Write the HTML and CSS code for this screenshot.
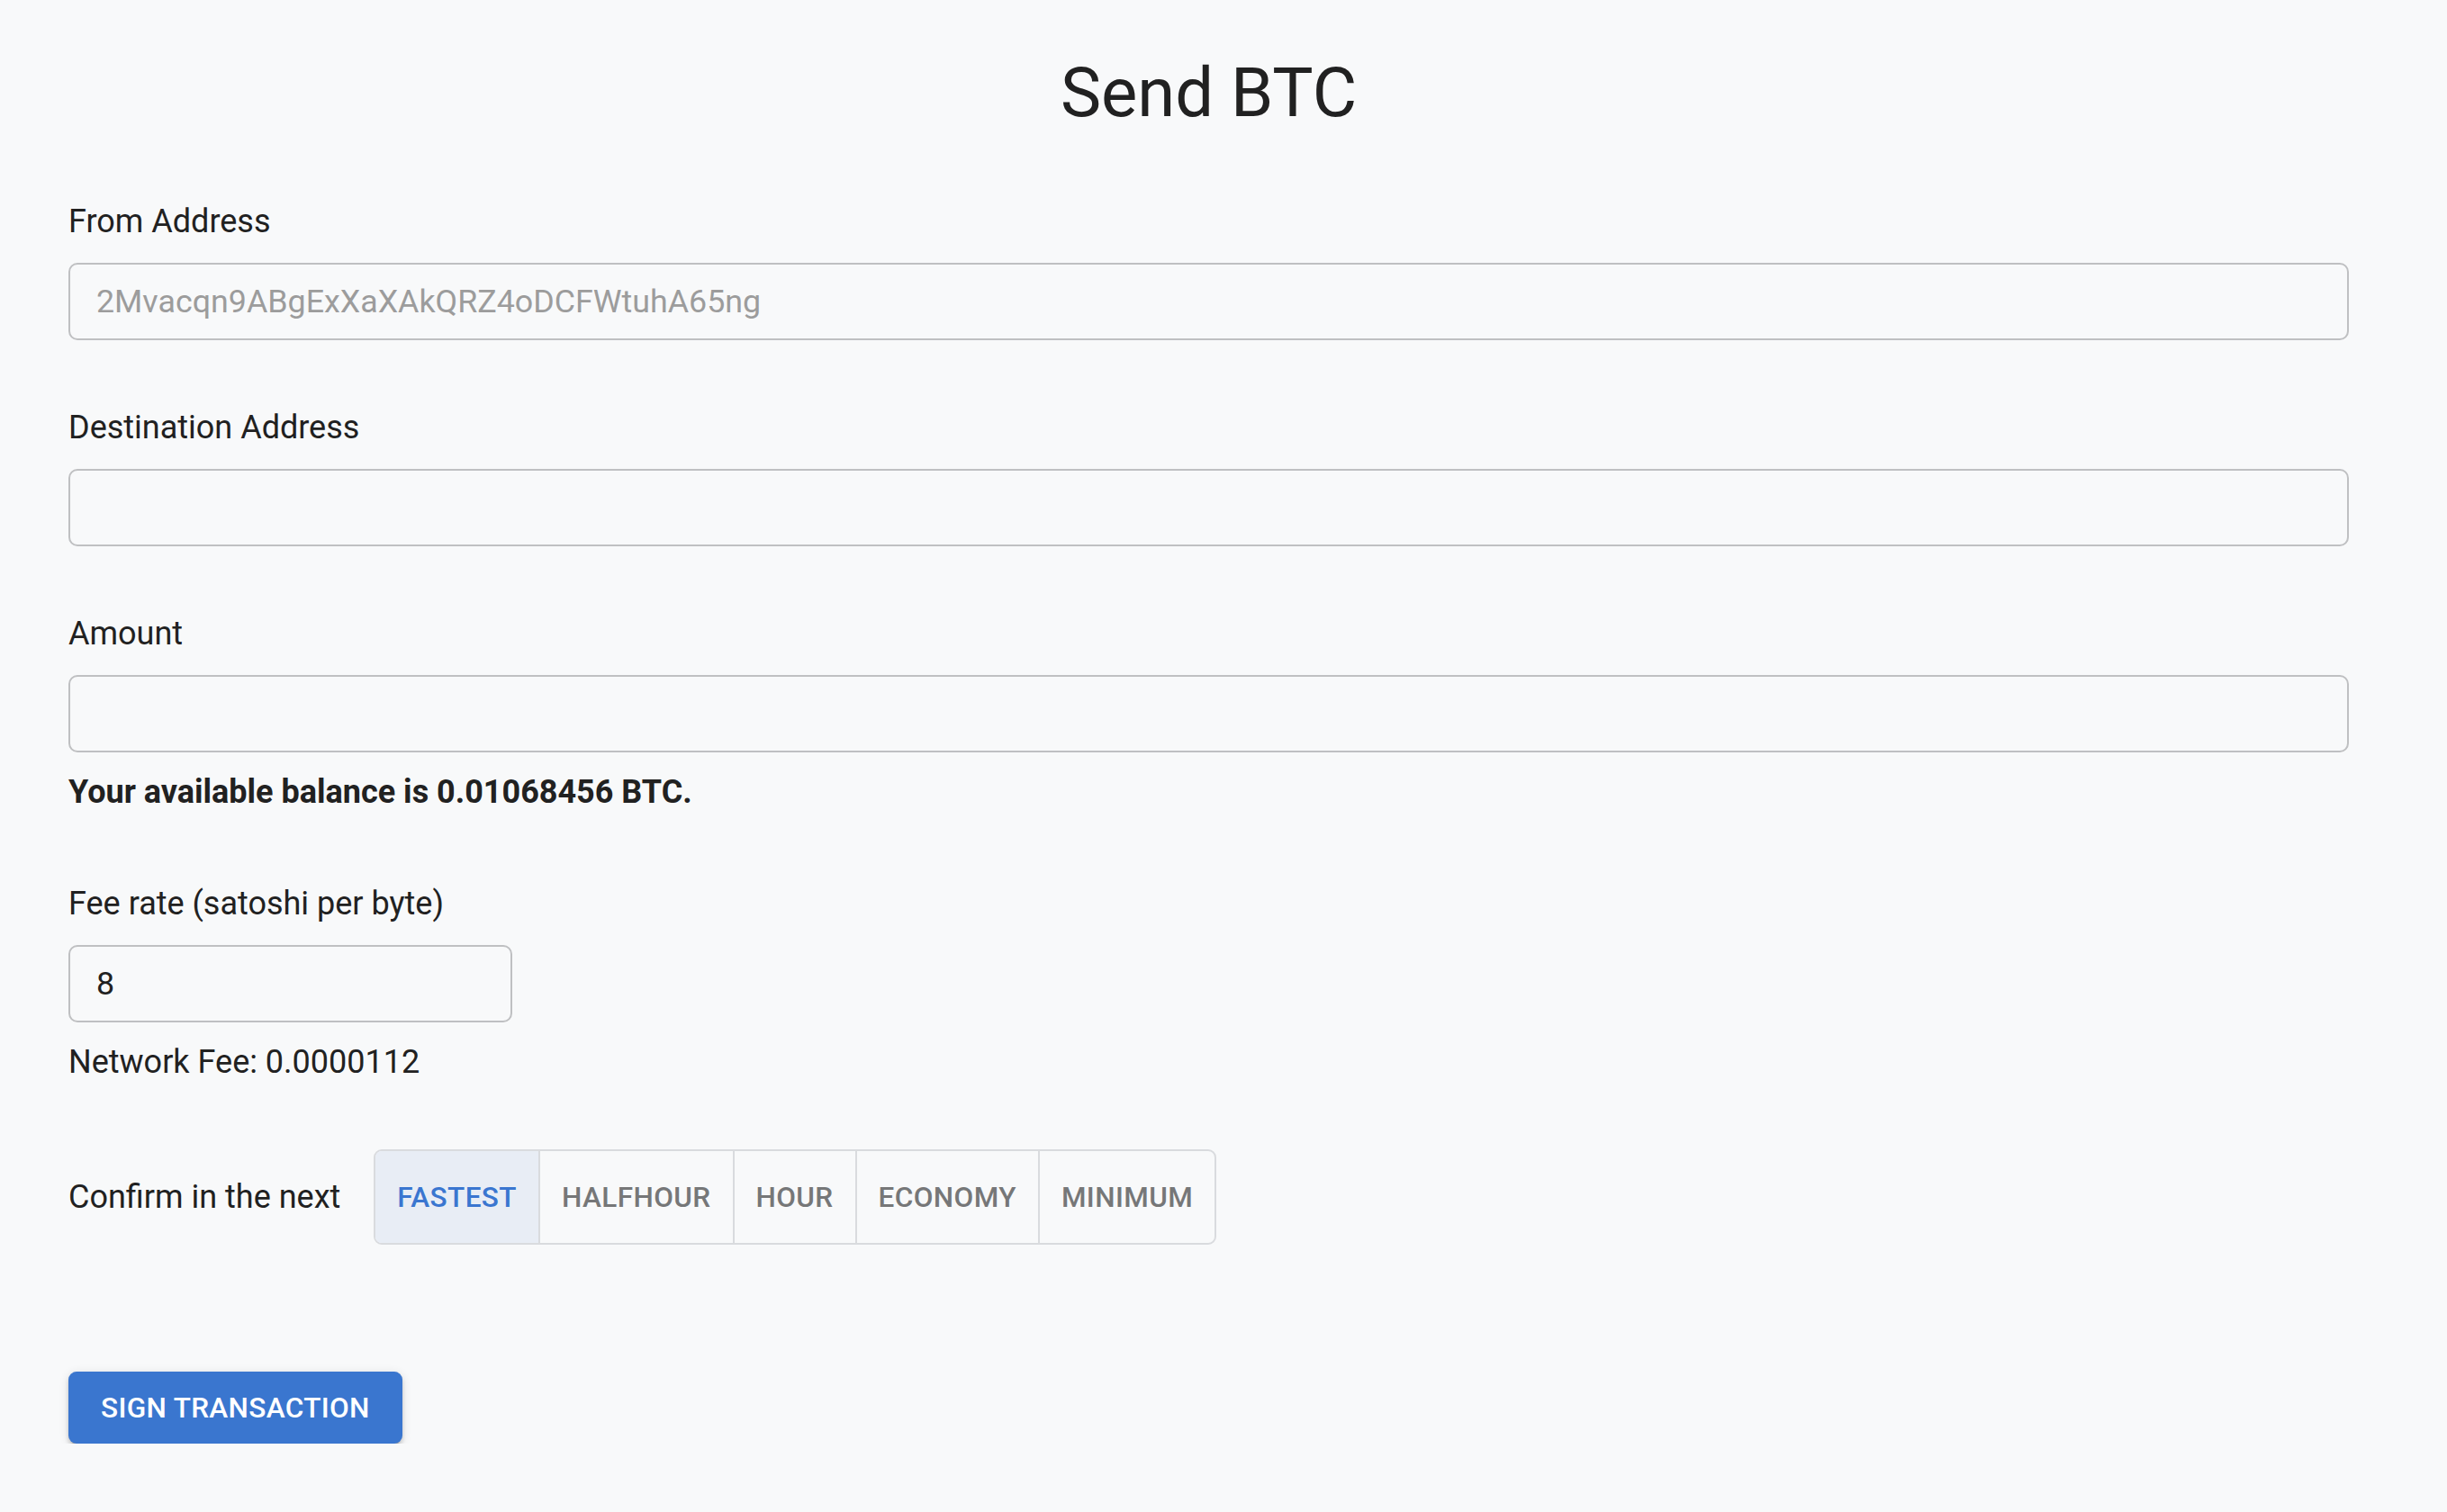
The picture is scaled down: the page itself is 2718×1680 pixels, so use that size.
FILE: index.html
```html
<!DOCTYPE html>
<html lang="en">
<head>
<meta charset="utf-8">
<title>Send BTC</title>
<link rel="stylesheet" href="styles.css">
</head>
<body>
<main class="page">
  <h1 class="title">Send BTC</h1>

  <div class="field">
    <label class="label" for="from">From Address</label>
    <input id="from" class="input input-disabled" type="text" value="2Mvacqn9ABgExXaXAkQRZ4oDCFWtuhA65ng" readonly>
  </div>

  <div class="field">
    <label class="label" for="dest">Destination Address</label>
    <input id="dest" class="input" type="text">
  </div>

  <div class="field">
    <label class="label" for="amount">Amount</label>
    <input id="amount" class="input" type="text">
    <p class="balance">Your available balance is 0.01068456 BTC.</p>
  </div>

  <div class="field">
    <label class="label" for="fee">Fee rate (satoshi per byte)</label>
    <input id="fee" class="input input-small" type="text" value="8">
    <p class="note">Network Fee: 0.0000112</p>
  </div>

  <div class="confirm">
    <span class="confirm-label">Confirm in the next</span>
    <div class="toggle-group">
      <button class="toggle selected" type="button">Fastest</button>
      <button class="toggle" type="button">Halfhour</button>
      <button class="toggle" type="button">Hour</button>
      <button class="toggle" type="button">Economy</button>
      <button class="toggle" type="button">Minimum</button>
    </div>
  </div>

  <div class="actions">
    <button class="primary" type="button">Sign Transaction</button>
  </div>
</main>
</body>
</html>
```

FILE: styles.css
```css
* {
  box-sizing: border-box;
}

html, body {
  margin: 0;
  background: #f8f9fa;
}

body {
  font-family: Roboto, "Liberation Sans", Arial, sans-serif;
  color: #212121;
  font-size: 36px;
  line-height: 54px;
}

.page {
  padding: 58px 109px 0 76px;
}

.title {
  margin: 0 0 70px;
  font-size: 76px;
  line-height: 91px;
  font-weight: 400;
  text-align: center;
  color: #212121;
}

.field {
  margin-bottom: 70px;
}

.label {
  display: block;
  margin-bottom: 19px;
  font-size: 36px;
  line-height: 54px;
}

.input {
  display: block;
  width: 100%;
  height: 86px;
  padding: 0 29px;
  border: 2px solid #bfc0c2;
  border-radius: 10px;
  background: transparent;
  font-family: inherit;
  font-size: 35.8px;
  color: #212121;
  outline: none;
}

.input-disabled {
  color: #9c9c9c;
}

.input-small {
  width: 493px;
}

.balance {
  margin: 17px 0 0;
  font-weight: 700;
}

.note {
  margin: 17px 0 0;
}

.confirm {
  display: flex;
  align-items: center;
  gap: 37px;
}

.confirm-label {
  line-height: 54px;
}

.toggle-group {
  display: flex;
  height: 106px;
  border: 2px solid #d9dbde;
  border-radius: 9px;
  overflow: hidden;
}

.toggle {
  margin: 0;
  padding: 0 24px;
  border: 0;
  border-left: 2px solid #d9dbde;
  background: transparent;
  font-family: inherit;
  font-size: 31.5px;
  font-weight: 500;
  letter-spacing: 0.4px;
  text-transform: uppercase;
  color: #767778;
}

.toggle:first-child {
  border-left: 0;
}

.toggle.selected {
  background: #e8edf5;
  color: #3a76d0;
}

.actions {
  margin-top: 141px;
}

.primary {
  height: 80px;
  padding: 0 36px;
  border: 0;
  border-radius: 9px;
  background: #3a76cf;
  color: #ffffff;
  font-family: inherit;
  font-size: 31.5px;
  font-weight: 500;
  letter-spacing: 0.35px;
  text-transform: uppercase;
  box-shadow: 0 7px 2px -4px rgba(0, 0, 0, 0.2), 0 4px 4px 0 rgba(0, 0, 0, 0.14), 0 2px 11px 0 rgba(0, 0, 0, 0.12);
}
```
